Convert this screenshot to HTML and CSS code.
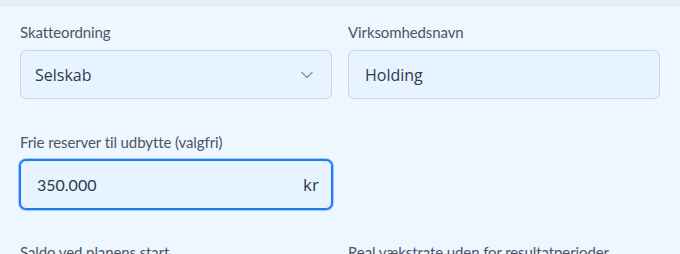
FILE: index.html
```html
<!DOCTYPE html>
<html lang="da">
<head>
  <meta charset="UTF-8">
  <title>Skatteordning</title>
  <link rel="stylesheet" href="styles.css">
</head>
<body>
  <div class="topbar"></div>
  <div class="panel">
    <div class="grid">
      <div class="field">
        <label for="ordning">Skatteordning</label>
        <div class="select-wrap">
          <select id="ordning">
            <option>Selskab</option>
            <option>Personlig</option>
          </select>
          <svg class="chevron" width="12" height="8" viewBox="0 0 12 8"><path d="M1 1.5 6 6.5 11 1.5" fill="none" stroke="#8b93a6" stroke-width="1.4" stroke-linecap="round" stroke-linejoin="round"/></svg>
        </div>
      </div>
      <div class="field">
        <label for="navn">Virksomhedsnavn</label>
        <input type="text" id="navn" class="text-input" value="Holding">
      </div>
      <div class="field">
        <label for="reserver">Frie reserver til udbytte (valgfri)</label>
        <div class="input-wrap focused">
          <input type="text" id="reserver" value="350.000">
          <span class="unit">kr</span>
        </div>
      </div>
      <div class="field"></div>
      <div class="field">
        <label>Saldo ved planens start</label>
      </div>
      <div class="field">
        <label>Real vækstrate uden for resultatperioder</label>
      </div>
    </div>
  </div>
</body>
</html>
```

FILE: styles.css
```css
body {
  margin: 0;
  background: #eef6ff;
  font-family: Lato, 'Noto Sans', sans-serif;
  color: #2f3a4c;
  overflow: hidden;
}

.topbar {
  height: 7px;
  background: #e7eef9;
}

.panel {
  padding: 15px 20px 0;
}

.grid {
  display: grid;
  grid-template-columns: 1fr 1fr;
  column-gap: 16px;
  row-gap: 33px;
}

.field label {
  display: block;
  font-size: 15px;
  line-height: 20px;
  color: #4b5567;
  margin-bottom: 8px;
  letter-spacing: -0.1px;
}

.select-wrap {
  position: relative;
}

select, .text-input, .input-wrap {
  box-sizing: border-box;
  width: 100%;
  height: 49px;
  border: 1px solid #c9d4ea;
  border-radius: 6px;
  background: #e7f3ff;
  font-family: 'Open Sans', Lato, sans-serif;
  font-size: 16px;
  color: #2f3a4c;
}

select {
  appearance: none;
  -webkit-appearance: none;
  padding: 0 14px;
}

.text-input {
  padding: 0 16px;
}

.chevron {
  position: absolute;
  right: 19px;
  top: 21px;
  pointer-events: none;
}

.input-wrap {
  display: flex;
  align-items: center;
  padding: 0 12px 0 16px;
}

.input-wrap.focused {
  border-color: #1c7cf0;
  box-shadow: 0 0 0 1px #1c7cf0, 0 0 0 2px #a9cdf8;
}

.input-wrap input {
  flex: 1;
  min-width: 0;
  border: none;
  background: transparent;
  outline: none;
  font-family: Lato, sans-serif;
  font-size: 16px;
  color: #2f3a4c;
  padding: 0;
}

.unit {
  font-size: 17px;
  color: #2f3a4c;
}
```
